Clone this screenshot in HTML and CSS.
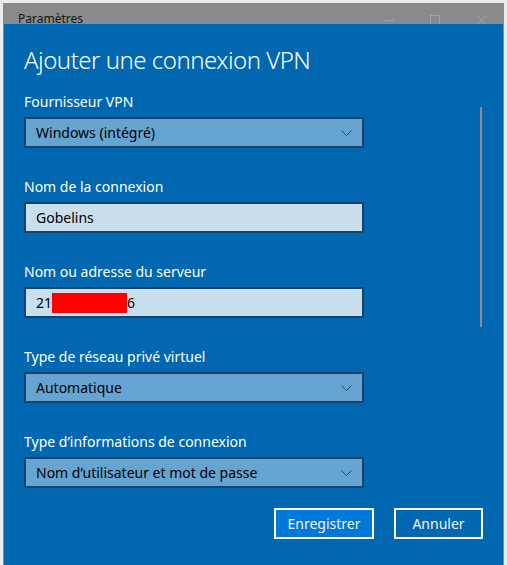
FILE: index.html
```html
<!DOCTYPE html>
<html lang="fr">
<head>
<meta charset="utf-8">
<title>Paramètres</title>
<link rel="stylesheet" href="styles.css">
</head>
<body>
<div class="screen">
  <div class="window">
    <div class="titlebar">
      <span class="title">Paramètres</span>
      <div class="controls">
        <div class="ctrl"><svg width="10" height="10" viewBox="0 0 10 10"><path d="M0 5.5h10" stroke="#a3a3a3" stroke-width="1"/></svg></div>
        <div class="ctrl"><svg width="10" height="10" viewBox="0 0 10 10"><rect x="0.5" y="0.5" width="9" height="9" fill="none" stroke="#a3a3a3" stroke-width="1"/></svg></div>
        <div class="ctrl"><svg width="11" height="11" viewBox="0 0 11 11"><path d="M0.5 0.5l10 10M10.5 0.5l-10 10" stroke="#a3a3a3" stroke-width="1"/></svg></div>
      </div>
    </div>
    <div class="dialog">
      <h1 class="heading">Ajouter une connexion VPN</h1>
      <div class="scroll-thumb"></div>
      <div class="form">
        <div class="field">
          <div class="label">Fournisseur VPN</div>
          <div class="box select"><span>Windows (intégré)</span><svg class="chev" width="11" height="6" viewBox="0 0 11 6"><path d="M0.5 0.5l5 5 5-5" fill="none" stroke="#27476b" stroke-width="1"/></svg></div>
        </div>
        <div class="field">
          <div class="label">Nom de la connexion</div>
          <div class="box input"><span>Gobelins</span></div>
        </div>
        <div class="field">
          <div class="label">Nom ou adresse du serveur</div>
          <div class="box input"><span>21</span><span class="redact"></span><span>6</span></div>
        </div>
        <div class="field">
          <div class="label">Type de réseau privé virtuel</div>
          <div class="box select"><span>Automatique</span><svg class="chev" width="11" height="6" viewBox="0 0 11 6"><path d="M0.5 0.5l5 5 5-5" fill="none" stroke="#27476b" stroke-width="1"/></svg></div>
        </div>
        <div class="field last">
          <div class="label">Type d’informations de connexion</div>
          <div class="box select"><span>Nom d’utilisateur et mot de passe</span><svg class="chev" width="11" height="6" viewBox="0 0 11 6"><path d="M0.5 0.5l5 5 5-5" fill="none" stroke="#27476b" stroke-width="1"/></svg></div>
        </div>
      </div>
      <div class="actions">
        <button class="btn primary">Enregistrer</button>
        <button class="btn secondary">Annuler</button>
      </div>
    </div>
  </div>
</div>
</body>
</html>
```
FILE: styles.css
```css
html, body {
  margin: 0;
  padding: 0;
}
body {
  font-family: "Noto Sans", "Liberation Sans", sans-serif;
  background: #ececec;
}
.screen {
  width: 507px;
  height: 565px;
  box-sizing: border-box;
  padding: 3px 3px 0 3px;
  background: #ececec;
  display: flex;
  overflow: hidden;
}
.window {
  flex: 1;
  display: flex;
  flex-direction: column;
  background: #8a8a8a;
  padding: 0 1px;
}
.titlebar {
  height: 21px;
  flex: none;
  display: flex;
  overflow: hidden;
}
.title {
  font-size: 12px;
  line-height: 16px;
  color: #141414;
  padding: 8px 0 0 14px;
}
.controls {
  margin-left: auto;
  margin-right: -1px;
  display: flex;
}
.ctrl {
  width: 46px;
  display: flex;
  justify-content: center;
  align-items: flex-start;
  padding-top: 12px;
}
.dialog {
  flex: 1;
  background: #0067b0;
  padding: 20px 20px 0 20px;
  position: relative;
  color: #fff;
}
.heading {
  margin: 0 0 16px 0;
  font-size: 24px;
  font-weight: 300;
  line-height: 32px;
  letter-spacing: -0.5px;
  color: #fff;
}
.scroll-thumb {
  position: absolute;
  left: 476px;
  top: 83px;
  width: 2px;
  height: 220px;
  background: #8c8c8c;
}
.field {
  margin-bottom: 29px;
}
.field.last {
  margin-bottom: 20px;
}
.label {
  font-size: 14px;
  line-height: 20px;
  margin-bottom: 5px;
  color: #fff;
}
.box {
  width: 340px;
  height: 31px;
  box-sizing: border-box;
  border: 2px solid #17426b;
  display: flex;
  align-items: center;
  padding: 0 10px;
  font-size: 14px;
  line-height: 20px;
  color: #000;
}
.select {
  background: #66a4d2;
}
.input {
  background: #c9dfee;
}
.chev {
  margin-left: auto;
}
.redact {
  display: inline-block;
  width: 75px;
  height: 20px;
  background: #ff0000;
}
.actions {
  display: flex;
  justify-content: flex-end;
  gap: 20px;
}
.btn {
  height: 31px;
  box-sizing: border-box;
  border: 2px solid #fff;
  color: #f2f2f2;
  font-family: "Noto Sans", "Liberation Sans", sans-serif;
  font-size: 14px;
  padding: 0;
}
.primary {
  width: 100px;
  background: #0078d7;
}
.secondary {
  width: 89px;
  background: #0067b0;
}
```
